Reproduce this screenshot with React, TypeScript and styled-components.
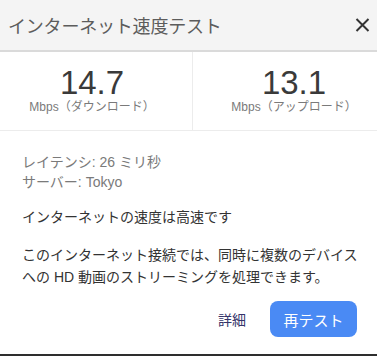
import React from "react";
import styled, { createGlobalStyle } from "styled-components";

const GlobalStyle = createGlobalStyle`
  html, body {
    margin: 0;
    padding: 0;
    background: #ffffff;
  }
  body {
    font-family: "Liberation Sans", "Noto Sans CJK JP", sans-serif;
  }
`;

const Dialog = styled.div`
  width: 377px;
  height: 356px;
  box-sizing: border-box;
  display: flex;
  flex-direction: column;
  background: #ffffff;
  border-bottom: 2px solid #2e2e2e;
`;

const Header = styled.div`
  height: 50px;
  display: flex;
  align-items: center;
  justify-content: space-between;
  padding: 0 5px 0 8px;
  background: #f4f4f4;
  border-bottom: 2px solid #dadada;
`;

const Title = styled.h1`
  margin: 0;
  font-size: 18px;
  font-weight: normal;
  color: #5c5c5c;
  letter-spacing: -0.2px;
`;

const CloseButton = styled.button`
  width: 20px;
  height: 20px;
  padding: 0;
  border: none;
  background: transparent;
  display: flex;
  align-items: center;
  justify-content: center;
  cursor: pointer;
`;

const Stats = styled.div`
  height: 78px;
  display: grid;
  grid-template-columns: 192px 1fr;
  border-bottom: 1px solid #ececec;
`;

const Stat = styled.div<{ $side: "left" | "right" }>`
  display: flex;
  flex-direction: column;
  align-items: center;
  padding-top: 13px;
  padding-left: ${(p) => (p.$side === "right" ? "18px" : "0")};
  padding-right: ${(p) => (p.$side === "left" ? "8px" : "0")};
  border-left: ${(p) => (p.$side === "right" ? "1px solid #ececec" : "none")};
`;

const Value = styled.div`
  font-size: 33px;
  line-height: 36px;
  color: #3a3a3a;
`;

const Unit = styled.div`
  font-size: 12px;
  line-height: 14px;
  color: #7a7a7a;
  margin-top: -1px;
  white-space: nowrap;
`;

const Body = styled.div`
  flex: 1;
  display: flex;
  flex-direction: column;
  padding: 21px 18px 0 22px;
  font-size: 14px;
`;

const Meta = styled.div`
  color: #7a7a7a;
  line-height: 20px;
`;

const Verdict = styled.p`
  margin: 15px 0 0;
  color: #333333;
  line-height: 20px;
`;

const Detail = styled.p`
  margin: 17px 0 0;
  color: #333333;
  line-height: 22px;
`;

const Actions = styled.div`
  display: flex;
  justify-content: flex-end;
  align-items: center;
  gap: 24px;
  margin-top: 13px;
  padding-right: 2px;
`;

const LinkButton = styled.button`
  border: none;
  background: transparent;
  padding: 0;
  font-family: inherit;
  font-size: 14px;
  color: #34346a;
  cursor: pointer;
`;

const PrimaryButton = styled.button`
  width: 87px;
  height: 36px;
  border: none;
  border-radius: 8px;
  background: #4a8af4;
  color: #ffffff;
  font-family: inherit;
  font-size: 15px;
  cursor: pointer;
`;

export default function App() {
  return (
    <>
      <GlobalStyle />
      <Dialog>
        <Header>
          <Title>インターネット速度テスト</Title>
          <CloseButton aria-label="閉じる">
            <svg width="15" height="14" viewBox="0 0 15 14">
              <path d="M1.5 1 L13.5 13 M13.5 1 L1.5 13" stroke="#333" strokeWidth="2" />
            </svg>
          </CloseButton>
        </Header>
        <Stats>
          <Stat $side="left">
            <Value>14.7</Value>
            <Unit>Mbps（ダウンロード）</Unit>
          </Stat>
          <Stat $side="right">
            <Value>13.1</Value>
            <Unit>Mbps（アップロード）</Unit>
          </Stat>
        </Stats>
        <Body>
          <Meta>レイテンシ: 26 ミリ秒</Meta>
          <Meta>サーバー: Tokyo</Meta>
          <Verdict>インターネットの速度は高速です</Verdict>
          <Detail>
            このインターネット接続では、同時に複数のデバイスへの HD 動画のストリーミングを処理できます。
          </Detail>
          <Actions>
            <LinkButton>詳細</LinkButton>
            <PrimaryButton>再テスト</PrimaryButton>
          </Actions>
        </Body>
      </Dialog>
    </>
  );
}
